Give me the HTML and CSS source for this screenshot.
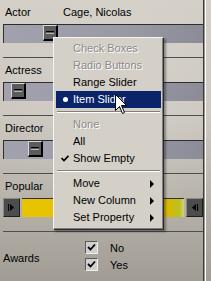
FILE: index.html
```html
<!DOCTYPE html>
<html>
<head>
<meta charset="utf-8">
<link rel="stylesheet" href="styles.css">
</head>
<body>
<div class="screen">
  <div class="panel">
    <section class="field first">
      <div class="label"><span class="name">Actor</span><span class="value">Cage, Nicolas</span></div>
      <div class="track"><div class="thumb" style="margin-left:39px"><i class="grip"></i></div></div>
    </section>
    <section class="field">
      <div class="label"><span class="name">Actress</span></div>
      <div class="track"><div class="thumb" style="margin-left:7px"><i class="grip"></i></div></div>
    </section>
    <section class="field">
      <div class="label"><span class="name">Director</span></div>
      <div class="track"><div class="thumb" style="margin-left:24px"><i class="grip"></i></div></div>
    </section>
    <section class="field">
      <div class="label"><span class="name">Popular</span></div>
      <div class="range">
        <div class="rbtn"><svg width="9" height="9" viewBox="0 0 9 9"><rect x="1" y="1" width="1" height="7" fill="#000"/><path d="M3 1 L7 4.5 L3 8 Z" fill="#000"/></svg></div>
        <div class="rbar"></div>
        <div class="rbtn"><svg width="9" height="9" viewBox="0 0 9 9"><path d="M6 1 L2 4.5 L6 8 Z" fill="#000"/><rect x="7" y="1" width="1" height="7" fill="#000"/></svg></div>
      </div>
    </section>
    <section class="field awards">
      <span class="name">Awards</span>
      <div class="checks">
        <label class="check"><span class="box"><svg width="9" height="9" viewBox="0 0 9 9"><path d="M1 4 L3.5 6.5 L8 1.5" fill="none" stroke="#000" stroke-width="1.8"/></svg></span>No</label>
        <label class="check"><span class="box"><svg width="9" height="9" viewBox="0 0 9 9"><path d="M1 4 L3.5 6.5 L8 1.5" fill="none" stroke="#000" stroke-width="1.8"/></svg></span>Yes</label>
      </div>
    </section>
  </div>
  <div class="edge"></div>
</div>

<div class="menu">
  <div class="item disabled">Check Boxes</div>
  <div class="item disabled">Radio Buttons</div>
  <div class="item">Range Slider</div>
  <div class="item active"><span class="mark"><span class="dot"></span></span>Item Slider</div>
  <div class="sep"></div>
  <div class="item disabled">None</div>
  <div class="item">All</div>
  <div class="item"><span class="mark"><svg width="8" height="7" viewBox="0 0 8 7"><path d="M0.5 3 L3 5.5 L7.5 0.8" fill="none" stroke="#000" stroke-width="1.7"/></svg></span>Show Empty</div>
  <div class="sep"></div>
  <div class="item sub">Move<span class="arrow"></span></div>
  <div class="item sub">New Column<span class="arrow"></span></div>
  <div class="item sub">Set Property<span class="arrow"></span></div>
</div>

<svg class="cursor" width="13" height="21" viewBox="0 0 13 21"><path d="M0.5 0.5 L0.5 16.5 L4.5 12.5 L7.5 19.5 L9.5 18.5 L6.5 11.5 L11.5 11.5 Z" fill="#fff" stroke="#000" stroke-width="1"/></svg>
</body>
</html>
```

FILE: styles.css
```css
html, body {
  margin: 0;
  padding: 0;
}
body {
  width: 211px;
  height: 281px;
  overflow: hidden;
  position: relative;
  font-family: "Liberation Sans", Arial, sans-serif;
  font-size: 11px;
  color: #000;
  background: #c8c4bc;
}
.screen {
  display: flex;
  height: 281px;
  background:
    radial-gradient(ellipse 160px 200px at 120px 110px, rgba(255,255,255,0.12), rgba(255,255,255,0) 70%),
    linear-gradient(180deg, #d4d0c8 0%, #cdc9c1 40%, #b4b0a8 75%, #a19d95 100%);
}
.panel {
  width: 200px;
  margin-left: 3px;
  border-right: 1px solid #3c3c3c;
}
.field {
  height: 57px;
  border-bottom: 1px solid #4e4e4e;
}
.field.first {
  height: 57px;
}
.label {
  height: 24px;
  display: flex;
  align-items: center;
  padding-left: 2px;
}
.field.first .label {
  height: 24px;
}
.name {
  width: 58px;
}
.track {
  height: 19px;
  box-sizing: border-box;
  border-top: 1px solid #2e2e2e;
  border-left: 1px solid #2e2e2e;
  background: linear-gradient(90deg, #a2a2ae 0%, #9a9aa6 60%, #8c8c98 100%);
}
.thumb {
  width: 15px;
  height: 16px;
  box-sizing: border-box;
  border-top: 1px solid #d8d8d8;
  border-left: 1px solid #d8d8d8;
  border-right: 2px solid #000;
  border-bottom: 2px solid #000;
  background: #5c5c5c;
  display: flex;
  align-items: center;
  justify-content: center;
}
.grip {
  display: block;
  width: 8px;
  height: 1px;
  border-top: 1px solid #000;
  border-bottom: 1px solid #b8b8b8;
}
.range {
  display: flex;
  gap: 2px;
  height: 19px;
}
.rbtn {
  width: 17px;
  box-sizing: border-box;
  background: #4c4c4c;
  border-top: 1px solid #8a8a8a;
  border-left: 1px solid #8a8a8a;
  border-right: 1px solid #1e1e1e;
  border-bottom: 1px solid #1e1e1e;
  display: flex;
  align-items: center;
  justify-content: center;
}
.rbar {
  flex: 1;
  border-top: 1px solid #2e2e2e;
  background: linear-gradient(90deg, #e8c400 0%, #dcb800 90%, #b8c020 97%, #d8d070 100%);
}
.awards {
  height: 48px;
  border-bottom: none;
  display: flex;
  align-items: center;
}
.awards .name {
  width: 82px;
  padding-top: 4px;
}
.checks {
  display: flex;
  flex-direction: column;
  gap: 4px;
}
.check {
  display: flex;
  align-items: center;
  height: 13px;
}
.box {
  width: 13px;
  height: 13px;
  box-sizing: border-box;
  border-top: 1px solid #5a5a5a;
  border-left: 1px solid #5a5a5a;
  border-right: 1px solid #f0f0f0;
  border-bottom: 1px solid #f0f0f0;
  background: #cfcfcf;
  display: flex;
  align-items: center;
  justify-content: center;
  margin-right: 12px;
}
.edge {
  width: 1px;
  background: #9a968e;
  border-right: 1px solid #ffffff;
  flex: none;
}
.menu {
  position: absolute;
  left: 53px;
  top: 37px;
  width: 111px;
  height: 193px;
  box-sizing: border-box;
  padding: 2px;
  background: #d4d0c8;
  border-top: 1px solid #f4f4f4;
  border-left: 1px solid #f4f4f4;
  border-right: 1px solid #2a2a2a;
  border-bottom: 1px solid #2a2a2a;
  box-shadow: inset -1px -1px 0 #808080, 2px 2px 2px rgba(0,0,0,0.35);
}
.item {
  height: 17px;
  line-height: 17px;
  padding-left: 17px;
  position: relative;
  white-space: nowrap;
}
.item.disabled {
  color: #8a8a8a;
  text-shadow: 1px 1px 0 #ffffff;
}
.item.active {
  background: #0a246a;
  color: #ffffff;
}
.mark {
  position: absolute;
  left: 5px;
  top: 0;
  width: 8px;
  height: 17px;
  display: flex;
  align-items: center;
  justify-content: center;
}
.dot {
  width: 5px;
  height: 5px;
  border-radius: 50%;
  background: #fff;
}
.arrow {
  position: absolute;
  right: 7px;
  top: 5px;
  width: 0;
  height: 0;
  border-top: 4px solid transparent;
  border-bottom: 4px solid transparent;
  border-left: 4px solid #000;
}
.sep {
  height: 8px;
  position: relative;
}
.sep::before {
  content: "";
  position: absolute;
  left: 1px;
  right: 1px;
  top: 3px;
  border-top: 1px solid #808080;
  border-bottom: 1px solid #ffffff;
}
.cursor {
  position: absolute;
  left: 115px;
  top: 94px;
}
```
